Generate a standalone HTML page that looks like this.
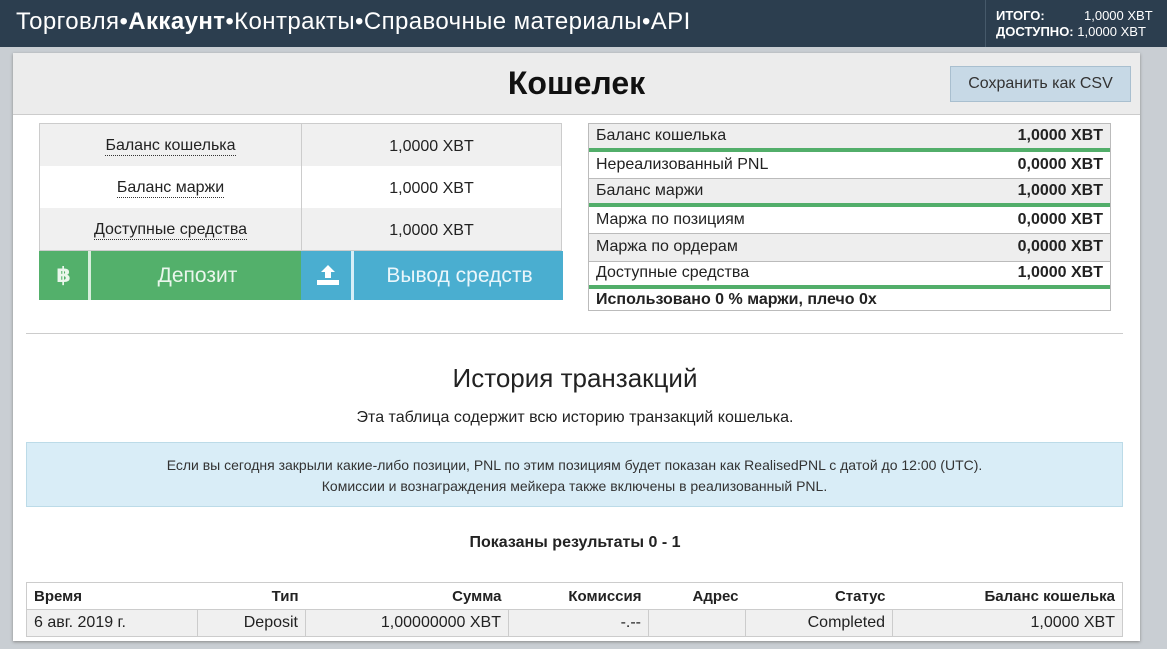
<!DOCTYPE html>
<html><head><meta charset="utf-8"><style>
*{box-sizing:border-box;margin:0;padding:0}
body{width:1167px;height:649px;overflow:hidden;background:#c9ced3;font-family:"Liberation Sans","DejaVu Sans",sans-serif;color:#222;position:relative}
.a{position:absolute}
#top{left:0;top:0;width:1167px;height:47px;background:#2c3e4f;color:#fff}
#nav{left:16px;top:8px;font-size:24px;letter-spacing:0.4px;white-space:nowrap}
#tot{left:985px;top:0;width:182px;height:47px;border-left:1px solid #46596a;font-size:13px;line-height:16px;padding:8px 0 0 10px}
#panel{left:13px;top:53px;width:1127px;height:588px;background:#fff;box-shadow:0 1px 3px #888}
#hd{left:0;top:0;width:1127px;height:62px;background:#ececec;border-bottom:1px solid #ccc}
.lt{left:39px;width:523px;border:1px solid #ccc}
.lr{height:42px;display:flex;font-size:16px}
.lr div{flex:0 0 261px;display:flex;align-items:center;justify-content:center;padding-top:3px}
.lr div+div{border-left:1px solid #ccc;flex:1}
.u{border-bottom:1px dotted #333;line-height:18px}
.rt{left:588px;top:123px;width:523px;border:1px solid #bbb;font-size:16px}
.rr{height:27.5px;display:flex;justify-content:space-between;align-items:center;padding:0 7px;border-bottom:1px solid #bbb}
.g{border-bottom:4px solid #52ae6a}
table{border-collapse:collapse;font-size:16px}
td{height:27px;padding:0 7px;border:1px solid #ccc;text-align:right}
</style></head><body>
<div id="top" class="a">
<div id="nav" class="a">Торговля•<b>Аккаунт</b>•Контракты•Справочные материалы•API</div>
<div id="tot" class="a"><b>ИТОГО:</b><span style="position:absolute;left:98px">1,0000 XBT</span><br><b>ДОСТУПНО:</b> 1,0000 XBT</div>
</div>
<div id="panel" class="a">
<div id="hd" class="a"><div class="a" style="left:0;width:1127px;top:12px;text-align:center;font-size:32px;font-weight:bold;color:#111">Кошелек</div>
<div class="a" style="left:937px;top:13px;width:181px;height:36px;background:#c7d9e6;border:1px solid #a9bfcf;font-size:16px;text-align:center;line-height:34px;color:#333">Сохранить как CSV</div></div>
</div>
<div class="a lt" style="top:123px">
<div class="lr" style="background:#f0f0f0"><div><span class="u">Баланс кошелька</span></div><div>1,0000 XBT</div></div>
<div class="lr" style="background:#fff"><div><span class="u">Баланс маржи</span></div><div>1,0000 XBT</div></div>
<div class="lr" style="background:#f0f0f0"><div><span class="u">Доступные средства</span></div><div>1,0000 XBT</div></div>
</div>
<div class="a" style="left:39px;top:251px;width:262px;height:49px;background:#53b06b;color:#eaf6ec;font-size:21px">
<div class="a" style="left:0;top:0;width:52px;height:49px;border-right:3px solid #d8eedc;text-align:center;line-height:49px;font-weight:bold">฿</div>
<div class="a" style="left:55px;width:207px;text-align:center;line-height:49px">Депозит</div></div>
<div class="a" style="left:301px;top:251px;width:262px;height:49px;background:#4aaed0;color:#eaf6fb;font-size:21px">
<svg class="a" style="left:15px;top:13px" width="24" height="22" viewBox="0 0 24 22"><path d="M12 1l7 7h-4v6h-6V8H5z" fill="#fff"/><rect x="1" y="16" width="22" height="5" fill="#fff"/></svg>
<div class="a" style="left:50px;top:0;width:3px;height:49px;background:#d6eef7"></div>
<div class="a" style="left:55px;width:207px;text-align:center;line-height:49px">Вывод средств</div></div>
<div class="a rt">
<div class="rr g" style="background:#eee"><span>Баланс кошелька</span><b>1,0000 XBT</b></div>
<div class="rr"><span>Нереализованный PNL</span><b>0,0000 XBT</b></div>
<div class="rr g" style="background:#eee"><span>Баланс маржи</span><b>1,0000 XBT</b></div>
<div class="rr"><span>Маржа по позициям</span><b>0,0000 XBT</b></div>
<div class="rr" style="background:#eee"><span>Маржа по ордерам</span><b>0,0000 XBT</b></div>
<div class="rr g"><span>Доступные средства</span><b>1,0000 XBT</b></div>
<div class="rr" style="border:0;height:21px"><b>Использовано 0 % маржи, плечо 0x</b></div>
</div>
<div class="a" style="left:26px;top:333px;width:1097px;border-top:1px solid #ccc"></div>
<div class="a" style="left:0;width:1150px;top:363px;text-align:center;font-size:26px;color:#222">История транзакций</div>
<div class="a" style="left:0;width:1150px;top:409px;text-align:center;font-size:16px">Эта таблица содержит всю историю транзакций кошелька.</div>
<div class="a" style="left:26px;top:442px;width:1097px;height:65px;background:#d9edf7;border:1px solid #bcdbe8;text-align:center;font-size:14px;line-height:21px;padding-top:12px;color:#333">Если вы сегодня закрыли какие-либо позиции, PNL по этим позициям будет показан как RealisedPNL с датой до 12:00 (UTC).<br>Комиссии и вознаграждения мейкера также включены в реализованный PNL.</div>
<div class="a" style="left:0;width:1150px;top:534px;text-align:center;font-size:16px;font-weight:bold">Показаны результаты 0 - 1</div>
<table class="a" style="left:26px;top:582px;width:1097px">
<tr style="font-weight:bold;font-size:15px"><td style="width:171px;text-align:left;border-right:0">Время</td><td style="width:108px;border-left:0;border-right:0">Тип</td><td style="width:203px;border-left:0;border-right:0">Сумма</td><td style="width:140px;border-left:0;border-right:0">Комиссия</td><td style="width:97px;border-left:0;border-right:0">Адрес</td><td style="width:147px;border-left:0;border-right:0">Статус</td><td style="border-left:0">Баланс кошелька</td></tr>
<tr style="background:#f0f0f0"><td style="text-align:left">6 авг. 2019 г.</td><td>Deposit</td><td>1,00000000 XBT</td><td>-.--</td><td></td><td>Completed</td><td>1,0000 XBT</td></tr>
</table>
</body></html>
